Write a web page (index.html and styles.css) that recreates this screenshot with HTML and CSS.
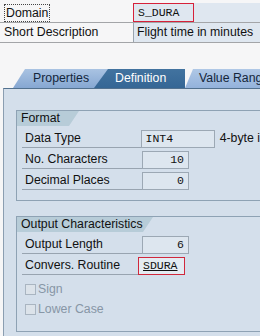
FILE: index.html
```html
<!doctype html>
<html lang="en">
<head>
    <meta charset="UTF-8">
    <title>Domain S_DURA</title>
    <link rel="stylesheet" href="styles.css">
</head>
<body>
    <div class="hdr">
        <div class="row">
            <div class="lbl"><span class="focus">Domain</span></div>
            <div class="val"><div class="key">S_DURA</div></div>
        </div>
        <div class="row">
            <div class="lbl">Short Description</div>
            <div class="val text">Flight time in minutes</div>
        </div>
    </div>

    <div class="tabs">
        <div class="tab tab-props">Properties</div>
        <div class="tab tab-def">Definition</div>
        <div class="tab tab-range">Value Range</div>
    </div>

    <div class="panel">
        <div class="group">
            <div class="group-title">Format</div>
            <div class="rows">
                <div class="frow">
                    <div class="flbl">Data Type</div>
                    <div class="field wide">INT4</div>
                    <div class="desc">4-byte i</div>
                </div>
                <div class="frow">
                    <div class="flbl">No. Characters</div>
                    <div class="field num">10</div>
                </div>
                <div class="frow">
                    <div class="flbl">Decimal Places</div>
                    <div class="field num">0</div>
                </div>
            </div>
        </div>

        <div class="group group-out">
            <div class="group-title title-out">Output Characteristics</div>
            <div class="rows">
                <div class="frow">
                    <div class="flbl">Output Length</div>
                    <div class="field num">6</div>
                </div>
                <div class="frow">
                    <div class="flbl short">Convers. Routine</div>
                    <div class="field conv"><u>SDURA</u></div>
                </div>
            </div>
            <div class="checks">
                <div class="check"><span class="box"></span>Sign</div>
                <div class="check"><span class="box"></span>Lower Case</div>
            </div>
        </div>
    </div>
</body>
</html>
```

FILE: styles.css
```css
* {
    margin: 0;
    padding: 0;
    box-sizing: border-box;
}

body {
    width: 260px;
    height: 336px;
    overflow: hidden;
    padding-top: 3px;
    background-color: #f6f6f7;
    font-family: "Liberation Sans", Arial, sans-serif;
    font-size: 12.3px;
    color: #111;
}

/* header rows */
.row {
    display: flex;
    height: 20px;
    border-bottom: 1px solid #a3a5a8;
}
.lbl {
    width: 133px;
    padding-left: 4px;
    line-height: 19px;
    white-space: nowrap;
}
.focus {
    display: inline-block;
    line-height: 16px;
    margin-top: 1px;
    padding: 0 1px;
    border: 1px dotted #444;
}
.val {
    flex: 1;
    background-color: #dfe7f0;
}
.val.text {
    border-left: 1px solid #9aa4ae;
    padding-left: 3px;
    line-height: 19px;
    white-space: nowrap;
}
.key {
    width: 61px;
    height: 19px;
    border: 1px solid #d6213a;
    padding-left: 4px;
    line-height: 17px;
    font-family: "Liberation Mono", "Courier New", monospace;
    font-size: 11.5px;
}

/* tab strip */
.tabs {
    display: flex;
    margin-top: 26px;
    padding-left: 13px;
    height: 19px;
    white-space: nowrap;
}
.tab {
    height: 19px;
    line-height: 19px;
    flex-shrink: 0;
}
.tab-props {
    width: 96px;
    padding-left: 20px;
    color: #14263a;
    background: linear-gradient(#a9c3e2, #86a7d2);
    clip-path: polygon(12px 0, 100% 0, 100% 100%, 0 100%);
}
.tab-def {
    width: 91px;
    margin-left: -15px;
    padding-left: 21px;
    color: #fff;
    background: linear-gradient(#42739f, #356695);
    clip-path: polygon(14px 0, 100% 0, 100% 100%, 0 100%);
}
.tab-range {
    width: 75px;
    padding-left: 14px;
    color: #14263a;
    background: linear-gradient(#b0c8e6, #93b2db);
    clip-path: polygon(8px 0, 100% 0, 100% 100%, 0 100%);
    overflow: hidden;
}

/* main panel */
.panel {
    margin-left: 3px;
    height: 260px;
    border-left: 1px solid #8b9eb1;
    border-top: 1px solid #52718f;
    background-color: #d4dfeb;
    padding: 21px 0 0 12px;
}

.group {
    border: 1px solid #8ea2b4;
    border-right: 0;
    padding: 0 0 10px 0;
}
.group-out {
    margin-top: 15px;
    padding-bottom: 13px;
}
.group-title {
    width: 62px;
    height: 15px;
    line-height: 15px;
    padding-left: 4px;
    background-color: #b7ccd8;
    clip-path: polygon(0 0, 100% 0, calc(100% - 10px) 100%, 0 100%);
    white-space: nowrap;
}
.title-out {
    width: 136px;
}

.rows {
    display: flex;
    flex-direction: column;
    gap: 3px;
    margin-top: 4px;
    padding-left: 5px;
}
.frow {
    display: flex;
    height: 18px;
    white-space: nowrap;
}
.flbl {
    width: 120px;
    padding-left: 3px;
    line-height: 17px;
    border-bottom: 1px solid #98a4b0;
}
.flbl.short {
    width: 116px;
}
.field {
    width: 47px;
    height: 18px;
    border: 1px solid #9ca8b4;
    background-color: #dde6ef;
    padding: 0 4px;
    line-height: 16px;
    font-family: "Liberation Mono", "Courier New", monospace;
    font-size: 11.5px;
}
.field.wide {
    width: 75px;
}
.field.num {
    text-align: right;
}
.field.conv {
    border-color: #d0283c;
    background-color: #e4ebf2;
}
.desc {
    margin-left: 5px;
    line-height: 17px;
}

.checks {
    display: flex;
    flex-direction: column;
    gap: 2px;
    margin-top: 5px;
    padding-left: 8px;
}
.check {
    display: flex;
    align-items: center;
    height: 18px;
    color: #8796a6;
}
.box {
    width: 11px;
    height: 11px;
    margin-right: 2px;
    border: 1px solid #a9b5c1;
    background-color: #dce3ea;
}
```
